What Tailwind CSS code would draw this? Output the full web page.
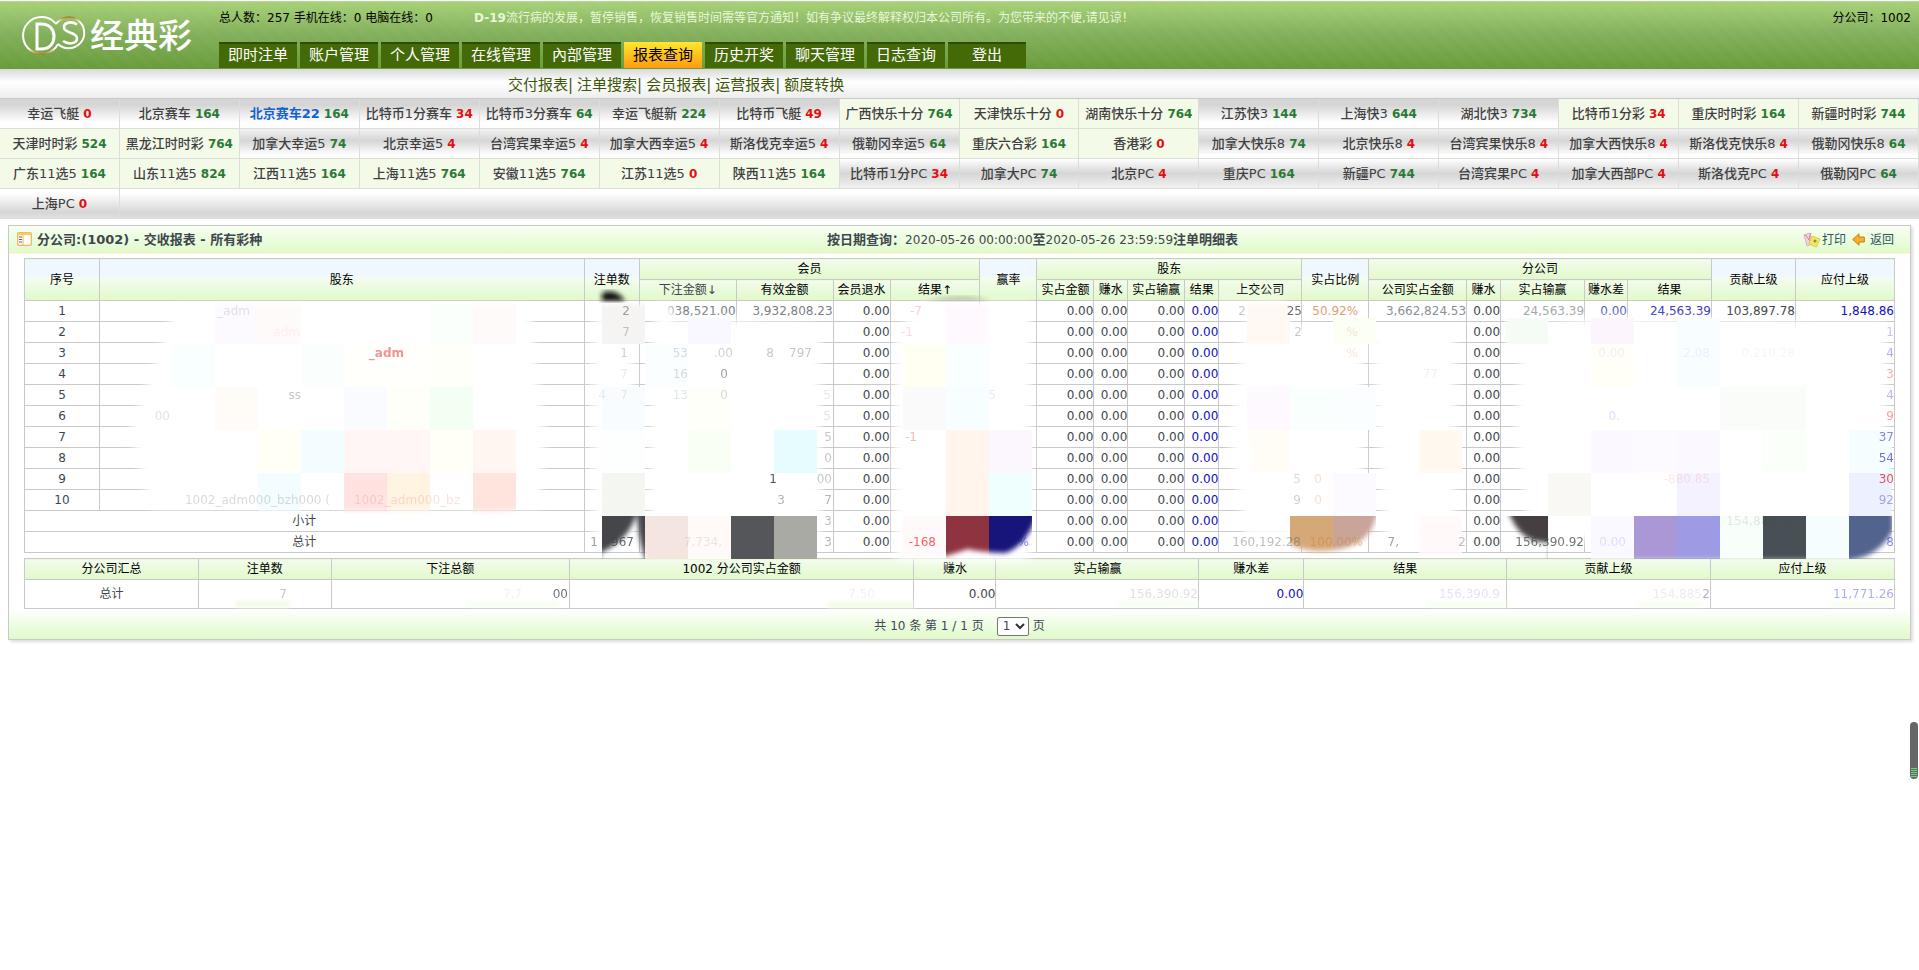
<!DOCTYPE html>
<html lang="zh-CN">
<head>
<meta charset="utf-8">
<title>经典彩 - 交收报表</title>
<script src="https://cdn.jsdelivr.net/npm/@tailwindcss/browser@4"></script>
</head>
<body class="relative min-h-screen bg-white font-['DejaVu_Sans','Noto_Sans_CJK_SC',sans-serif] text-xs text-[#3d474d]">

<header class="mt-px flex h-[68px] border-t border-[#b5d596] bg-[repeating-linear-gradient(45deg,rgba(255,255,255,0.05)_0px,rgba(255,255,255,0.05)_1px,rgba(0,0,0,0)_1px,rgba(0,0,0,0)_2px),linear-gradient(#a5d075,#83b05b_45%,#659a36)]">
  <a href="#" aria-label="DS 经典彩" class="block w-[219px] shrink-0">
    <svg class="block h-[67px] w-[219px]" viewBox="0 2 219 67">
      <defs>
        <linearGradient id="ring" x1="0" y1="0" x2="0" y2="1"><stop offset="0" stop-color="#fff"/><stop offset=".85" stop-color="#fff"/><stop offset="1" stop-color="#a8842a"/></linearGradient>
        <linearGradient id="ring2" x1="0" y1="0" x2="0" y2="1"><stop offset="0" stop-color="#a8842a"/><stop offset=".15" stop-color="#fff"/><stop offset="1" stop-color="#fff"/></linearGradient>
      </defs>
      <path d="M56 24A18.500 18.500 0 1 0 58 44" fill="none" stroke="url(#ring)" stroke-width="2"/>
      <path d="M56 24A15.500 15.500 0 1 1 58 44" fill="none" stroke="url(#ring2)" stroke-width="2"/>
      <path d="M37 24V49H41C50 49 54 43 54 36.500S50 24 41 24Z" fill="none" stroke="#fff" stroke-width="3"/>
      <path d="M77 24.500C72 21 64 22 64 27.500C64 33.500 77 32 77 38C77 44.500 68 44.500 63 41" fill="none" stroke="#fff" stroke-width="2.600"/>
      <text x="90" y="48" font-size="34" font-weight="500" fill="#fff" font-family="Noto Sans CJK SC">经典彩</text>
    </svg>
  </a>
  <div class="flex min-w-0 flex-1 flex-col justify-between">
    <div class="flex items-center pt-[7px] pr-2 leading-[18px] text-black">
      <span class="w-[255px] whitespace-nowrap">总人数：257 手机在线：0 电脑在线：0</span>
      <span class="flex-1 whitespace-nowrap text-[#e8f7d8]"><b>D-19</b>流行病的发展，暂停销售，恢复销售时间需等官方通知！如有争议最终解释权归本公司所有。为您带来的不便,请见谅！</span>
      <span>分公司：1002</span>
    </div>
    <nav id="nav" class="flex gap-[3px] pb-px text-[15px]"></nav>
  </div>
</header>

<nav id="sub" class="flex h-[29px] items-center gap-1 bg-linear-to-b from-[#d9d9d9] via-white via-45% to-[#ededed] pt-1 pl-[508px] text-[15px] text-[#3e5607]"></nav>

<section id="games" class="grid grid-cols-16 border-t border-[#c9c9c9] bg-linear-to-b from-white from-75% to-[#d6d6d6]"></section>

<main class="mx-2 mt-[6px] border border-[#c9c9c9] shadow-[2px_2px_3px_#ddd]">
  <div class="flex h-[28px] items-center justify-between border-b border-[#fdf3d8] bg-linear-to-b from-[#f8fff3] to-[#e0fac9] pr-4 pl-2 text-[13px]">
    <h1 class="flex items-center gap-[5px] font-bold">
      <svg class="h-[14px] w-[15px]" viewBox="0 0 15 14"><rect x=".7" y=".7" width="13.600" height="12.600" rx="1" fill="#fff" stroke="#f3b654" stroke-width="1.300"/><path d="M1 2H14" stroke="#f8cc70" stroke-width="2.400"/><path d="M6 2V13" stroke="#f3b654"/><path d="M2 5H5M2 7.500H5M2 10H5" stroke="#666"/></svg>
      分公司:(1002) - 交收报表 - 所有彩种
    </h1>
    <p><b>按日期查询：</b><span class="text-xs">2020-05-26 00:00:00</span><b>至</b><span class="text-xs">2020-05-26 23:59:59</span><b>注单明细表</b></p>
    <div class="flex items-center gap-[6px] text-xs text-[#2c5560]">
      <a href="#" class="flex items-center gap-px">
        <svg class="h-4 w-[18px]" viewBox="0 0 18 16"><path d="M1 3L7 1L9 12L4 14Z" fill="#f3d3da" stroke="#c9a0ab" stroke-width=".7"/><path d="M2 2.500L8 10M8 1L5.500 8" stroke="#d88490" stroke-width="1"/><path d="M9 4L17 7L13.500 15L6 12Z" fill="#f4e75c" stroke="#d0bd3a" stroke-width=".7"/><circle cx="12" cy="9" r="1.600" fill="#7d9a50"/></svg>打印</a>
      <a href="#" class="flex items-center gap-[5px]">
        <svg class="h-[13px] w-[13px]" viewBox="0 0 13 13"><path d="M.7 6.500L7 .8V4H12.300V9H7V12.200Z" fill="#fbb02b" stroke="#c87d14"/></svg>返回</a>
    </div>
  </div>
  <div class="px-[15px] pt-1">
    <table class="w-full table-fixed border-collapse text-center leading-[18px]">
      <colgroup id="cols"></colgroup>
      <thead id="head" class="text-black"></thead>
      <tbody id="body"></tbody>
    </table>
    <table class="mt-[5px] w-full table-fixed border-collapse text-center leading-[18px]">
      <colgroup id="cols2"></colgroup>
      <thead class="text-black"><tr id="head2"></tr></thead>
      <tbody><tr id="body2"></tr></tbody>
    </table>
  </div>
  <div class="flex h-[30px] items-center justify-center bg-linear-to-b from-white to-[#e0fac9] pt-1">
    <span>共 10 条 第 1 / 1 页</span>
    <label class="ml-[13px] flex items-center gap-1">
      <span class="relative flex">
        <select class="h-[19px] w-8 appearance-none rounded-[2px] border border-[#767676] bg-white pl-[5px] text-xs leading-none"><option>1</option></select>
        <svg class="pointer-events-none absolute top-[6px] right-1 h-[7px] w-[10px]" viewBox="0 0 10 7"><path d="M1 1L5 5L9 1" fill="none" stroke="#333" stroke-width="2"/></svg>
      </span>页</label>
  </div>
</main>

<!-- Redaction smudges and mosaic blocks over the private figures -->
<svg id="smudge" class="pointer-events-none absolute top-0 left-0 h-[650px] w-full" viewBox="0 0 1919 650" preserveAspectRatio="none" aria-hidden="true">
  <defs>
    <filter id="soft" x="-20%" y="-20%" width="140%" height="140%"><feGaussianBlur stdDeviation="5"/></filter>
    <filter id="fine" x="-20%" y="-20%" width="140%" height="140%"><feGaussianBlur stdDeviation="2.5"/></filter>
    <mask id="edge" maskUnits="userSpaceOnUse" x="0" y="290" width="1919" height="280">
      <g fill="#fff" filter="url(#fine)">
        <path d="M120 304H560V500Q510 514 480 511H120Z"/>
        <path d="M595 304H880V570H595Z"/>
        <path d="M880 304H1041V500Q1031 545 1005 553Q980 552 968 549L946 556H880Z"/>
        <path d="M1230 304H1465V516H1376Q1370 551 1318 551Q1285 550 1260 520Z"/>
        <path d="M1376 500H1465V555H1400Z"/>
        <path d="M1505 304H1893V530Q1880 556 1850 560H1550V542Q1520 545 1508 510Z"/>
      </g>
      <path d="M637 512Q630 540 600 553V570H650Q638 545 637 512Z" fill="#000" filter="url(#fine)"/>
    </mask>
  </defs>
  <g fill="#fff" filter="url(#soft)">
    <path d="M175 306H530L545 440L540 508H150L130 430Z"/>
    <path d="M593 318H633V536H593Z"/>
    <path d="M652 330L700 318L820 326V545H650Z"/>
    <path d="M655 305H674V330H655Z"/>
    <path d="M925 304H1030V560H895V330Z"/>
    <path d="M1244 322L1362 332V536H1245L1230 440Z"/>
    <path d="M1260 305H1284V330H1260Z"/>
    <path d="M1372 328H1455V540H1385Z"/>
    <path d="M1522 327L1600 318L1885 324V540H1530L1515 430Z"/>
    <path d="M1220 292H1285V306H1220Z" opacity=".3"/>
  </g>
  <path d="M602 293Q616 288 625 301H602Z" fill="#111" filter="url(#fine)"/>
  <path d="M925 301Q965 292 990 301Z" fill="#8a9a80" opacity=".6" filter="url(#fine)"/>
  <g id="cells" mask="url(#edge)" shape-rendering="crispEdges"></g>
  <g fill="#eefce3" filter="url(#fine)"><path d="M235 601H290V607H235ZM468 603H560V606H468ZM828 602H914V608H828ZM1118 602H1199V605H1118ZM1428 603H1510V606H1428ZM1638 603H1702V606H1638ZM1830 603H1890V606H1830Z"/></g>
  <g id="frags" font-size="12" font-family="DejaVu Sans"></g>
</svg>

<div class="absolute top-[722px] right-px h-[57px] w-2 overflow-hidden rounded-full bg-[#666]">
  <div class="absolute inset-x-px bottom-[2px] h-[9px] bg-[repeating-linear-gradient(#6fcf7f_0px,#6fcf7f_1px,#4c7a54_1px,#4c7a54_2px)]"></div>
</div>

<script>
const $ = id => document.getElementById(id);

$('nav').innerHTML = '即时注单 账户管理 个人管理 在线管理 內部管理 报表查询 历史开奖 聊天管理 日志查询 登出'.split(' ').map((t, i) =>
  `<a href="#" class="flex h-[26px] w-[78px] items-center justify-center border-t-2 ${i === 5 ? 'border-[#ffe23a] bg-linear-to-b from-[#ffe128] to-[#ff9b12] text-black' : 'border-[#2e4c03] bg-[#436a06] text-white'}">${t}</a>`).join('');
$('sub').innerHTML = '交付报表 注单搜索 会员报表 运营报表 额度转换'.split(' ').map((t, i) =>
  `<span class="flex"><a href="#">${t}</a>${i < 4 ? '|' : ''}</span>`).join('');

const games = [
  ['幸运飞艇 0', '北京赛车 164', '北京赛车22 164', '比特币1分赛车 34', '比特币3分赛车 64', '幸运飞艇新 224', '比特币飞艇 49', '广西快乐十分 764', '天津快乐十分 0', '湖南快乐十分 764', '江苏快3 144', '上海快3 644', '湖北快3 734', '比特币1分彩 34', '重庆时时彩 164', '新疆时时彩 744'],
  ['天津时时彩 524', '黑龙江时时彩 764', '加拿大幸运5 74', '北京幸运5 4', '台湾宾果幸运5 4', '加拿大西幸运5 4', '斯洛伐克幸运5 4', '俄勒冈幸运5 64', '重庆六合彩 164', '香港彩 0', '加拿大快乐8 74', '北京快乐8 4', '台湾宾果快乐8 4', '加拿大西快乐8 4', '斯洛伐克快乐8 4', '俄勒冈快乐8 64'],
  ['广东11选5 164', '山东11选5 824', '江西11选5 164', '上海11选5 764', '安徽11选5 764', '江苏11选5 0', '陕西11选5 164', '比特币1分PC 34', '加拿大PC 74', '北京PC 4', '重庆PC 164', '新疆PC 744', '台湾宾果PC 4', '加拿大西部PC 4', '斯洛伐克PC 4', '俄勒冈PC 64'],
  ['上海PC 0']
];
const greens = [[7, 8, 9, 13, 14, 15], [0, 1, 8, 9], [0, 1, 2, 3, 4, 5, 6], []];
const grays = [
  'bg-linear-to-b from-[#d5d5d5] from-20% to-white to-80%',
  'bg-linear-to-b from-[#f2f2f2] via-[#d6d6d6] via-40% to-white to-90%',
  'bg-linear-to-b from-white via-[#d6d6d6] via-50% to-[#f2f2f2]',
  'bg-linear-to-b from-white from-15% via-[#d6d6d6] via-80% to-[#e0e0e0]'
];
const redNums = [34, 49, 4, 0];
$('games').innerHTML = games.map((row, r) => row.map((t, c) => {
  const [name, n] = t.split(' ');
  return `<a href="#" class="flex h-[30px] items-center justify-center gap-1 border-r border-b border-[#dcdfd8] text-[13px] whitespace-nowrap ${greens[r].includes(c) ? 'bg-[#f4fae8]' : grays[r]}"><span class="${name === '北京赛车22' ? 'font-bold text-[#1461d2]' : 'font-medium text-[#404040]'}">${name}</span><b class="text-xs ${redNums.includes(+n) ? 'text-[#e01010]' : 'text-[#2a7a35]'}">${n}</b></a>`;
}).join('')).join('') + `<div class="col-span-15 ${grays[3]}"></div>`;

const cols = ws => ws.map(w => `<col style="width:${(w / 18.71).toFixed(3)}%">`).join('');
$('cols').innerHTML = cols([75, 485, 55, 97, 97, 57, 90, 57, 57, 34, 57, 34, 83, 67, 98, 34, 84, 43, 84, 84, 99]);
$('cols2').innerHTML = cols([174, 133, 238, 345, 82, 203, 105, 203, 204, 184]);

const tall = t => `<th rowspan="2" class="border border-[#c9c9c9] bg-linear-to-b from-[#f0f8ff] from-40% via-[#f4fcf0] via-45% to-[#e0f9c9] p-0 font-normal">${t}</th>`;
const th = (t, s = 1, cls = '') => `<th colspan="${s}" class="h-[21px] border border-[#c9c9c9] bg-linear-to-b from-[#f3fcec] to-[#e0f9c9] p-0 font-normal whitespace-nowrap ${cls}">${t}</th>`;
$('head').innerHTML = `<tr>${tall('序号')}${tall('股东')}${tall('注单数')}${th('会员', 4)}${tall('赢率')}${th('股东', 5)}${tall('实占比例')}${th('分公司', 5)}${tall('贡献上级')}${tall('应付上级')}</tr><tr>`
  + th('下注金额↓', 1, 'text-[#3d474d]') + '有效金额 会员退水 结果↑ 实占金额 赚水 实占输赢 结果 上交公司 公司实占金额 赚水 实占输赢 赚水差 结果'.split(' ').map(t => th(t)).join('') + '</tr>';

const td = (t, cls = '') => `<td class="h-[21px] border border-[#c9c9c9] p-0 ${cls}">${t}</td>`;
const num = (t, cls = '') => td(t, 'text-right ' + cls);
const blue = 'text-[#1010b8]';
const line = first => num(first[0]) + num(first[1], 'text-[#7a8085]') + num(first[2], 'text-[#7a8085]') + num('0.00') + num(first[3]) + num('')
  + num('0.00') + num('0.00') + num('0.00') + num('0.00', blue) + num('') + td(first[4], 'text-[#e0a070]') + num(first[5], 'text-[#8a9094]') + num('0.00')
  + num(first[6], 'text-[#a5a9ac]') + num(first[7], 'text-[#5a5ad0]') + num(first[8], 'text-[#3a3ac8]') + num(first[9]) + num(first[10], blue);
const empty = Array(11).fill('');
const row1 = ['', '038,521.00', '3,932,808.23', '', '50.92%', '3,662,824.53', '24,563.39', '0.00', '24,563.39', '103,897.78', '1,848.86'];
let html = '';
for (let i = 1; i <= 10; i++) html += '<tr>' + td(i) + td('') + line(i === 1 ? row1 : empty) + '</tr>';
for (const t of ['小计', '总计']) html += `<tr><td colspan="2" class="h-[21px] border border-[#c9c9c9] p-0">${t}</td>${line(empty)}</tr>`;
$('body').innerHTML = html;

$('head2').innerHTML = '分公司汇总,注单数,下注总额,1002 分公司实占金额,赚水,实占输赢,赚水差,结果,贡献上级,应付上级'.split(',').map(t => th(t)).join('');
$('body2').innerHTML = '<td class="h-[29px] border border-[#c9c9c9] p-0">总计</td>' + td('') + num('') + num('') + num('0.00') + num('') + num('0.00', blue) + num('') + num('') + num('');

/* Mosaic blocks on a 43px lattice: column, row, colour */
const cells = [
  [5,7,'#fcfafe'],[6,7,'#fffafa'],[10,7,'#fafffb'],[11,7,'#fffafa'],[4,8,'#f9feff'],[7,8,'#fafffd'],[8,8,'#fffffb'],[9,8,'#fffffb'],[10,8,'#fffffa'],
  [5,9,'#fffcf7'],[8,9,'#fafbff'],[9,9,'#fffffa'],[10,9,'#f4fff3'],[6,10,'#fffff5'],[7,10,'#f3fdff'],[8,10,'#fff6f5'],[9,10,'#fff6f5'],[10,10,'#fffff8'],[11,10,'#fff5f1'],
  [6,11,'#f3fdff'],[8,11,'#ffe3e2'],[9,11,'#fff4e2'],[11,11,'#ffe3dd'],
  [14,7,'#f6f4f3'],[14,9,'#f8fcff'],[14,10,'#fcfffe'],[14,11,'#f4f7f1'],[14,12,'#45464a'],[15,8,'#fbfeff'],[16,9,'#fffffa'],[16,10,'#fafff6'],
  [15,12,'#f5e5e0'],[16,12,'#fffaf8'],[17,12,'#54565a'],[18,12,'#a9aaa3'],[18,10,'#e7fcff'],
  [21,8,'#fffff2'],[21,9,'#fafafa'],[22,7,'#fff9ff'],[22,8,'#f9ffff'],[22,9,'#f6feff'],[22,10,'#fff5ed'],[22,11,'#fff5ed'],[21,12,'#fffafa'],[22,12,'#8f3340'],
  [23,10,'#fcf7ff'],[23,11,'#effffe'],[23,12,'#17147a'],
  [29,7,'#fff8f3'],[29,9,'#fdf9ff'],[29,10,'#fffdf5'],[30,9,'#f9fffd'],[31,9,'#fafeff'],[31,11,'#fdfaff'],[30,12,'#d5a878'],[31,12,'#c9a498'],
  [33,10,'#fff9f0'],[33,12,'#fffaf9'],[35,12,'#453f42'],[36,11,'#faf8f4'],[37,8,'#fffff8'],[37,10,'#fcf8ff'],[37,12,'#faf9ff'],
  [38,10,'#fdfaff'],[38,12,'#a998d5'],[39,8,'#f8fdff'],[39,10,'#fbf8ff'],[39,11,'#f5f2ff'],[39,12,'#9d9be3'],[40,12,'#f8fefa'],[40,9,'#fafcfa'],[41,9,'#fafcfa'],
  [41,10,'#fafffa'],[41,12,'#465055'],[42,12,'#f5fdff'],[43,10,'#f5fdff'],[43,11,'#edf0ff'],[43,12,'#52638e']
];
/* Lower parts of blocks whose upper part leaves the first row readable */
const strips = [[16,'#f9f7ff'],[31,'#fbfff4'],[35,'#f5fcf6'],[37,'#fcf5fd'],[39,'#f8fdff']];
$('cells').innerHTML = cells.map(([c, r, f]) => `<rect x="${c * 43}" y="${r * 43}" width="43" height="43" fill="${f}"/>`).join('')
  + strips.map(([c, f]) => `<rect x="${c * 43}" y="318" width="43" height="26" fill="${f}"/>`).join('');

/* Remnants of figures still visible through the smudges: right edge, baseline, text, colour, opacity */
const g = '#3d474d', b = '#1010c0', d = '#e01010', o = '#d8803a';
const frags = [
  [630,315,'2',g,.5],[630,336,'7',g,.3],[628,357,'1',g,.25],[628,378,'7',g,.12],[606,399,'4',g,.1],[628,399,'7',g,.12],
  [250,315,'_adm',g,.15],[300,336,'adm',d,.06],[404,357,'_adm',d,.45,'bold'],[301,399,'ss',g,.3],[170,420,'00',g,.15],[330,504,'1002_adm000_bzh000 (',g,.2],[460,504,'1002_adm000_bz',d,.13],
  [688,357,'53',g,.2],[733,357,'.00',g,.25],[688,378,'16',g,.2],[728,378,'0',g,.5],[688,399,'13',g,.15],[728,399,'0',g,.2],
  [812,357,'8    797',g,.3],[831,399,'5',g,.12],[831,420,'5',g,.15],[832,441,'5',g,.3],[832,462,'0',g,.3],[777,483,'1',g,.9],[832,483,'00',g,.3],[785,504,'3',g,.4],[832,504,'7',g,.4],[832,525,'3',g,.35],[832,546,'3',g,.4],
  [922,315,'-7',d,.2],[913,336,'-1',d,.15],[917,441,'-1',d,.3],[996,399,'5',b,.1],[936,546,'-168',d,.65],[1029,546,'%',b,.5],
  [1302,315,'25',g,.8],[1246,315,'2',g,.3],[1302,336,'2',g,.3],[1358,336,'%',o,.2],[1358,357,'%',o,.2],[1301,483,'5',g,.2],[1301,504,'9',g,.25],[1322,483,'0',o,.25],[1322,504,'0',o,.25],
  [1301,546,'160,192.28',g,.35],[1363,546,'100.00%',o,.5],[1399,546,'7,',g,.5],[1466,546,'2',g,.35],[1438,378,'77',g,.08],
  [1625,357,'0.00',b,.07],[1620,420,'0.',b,.15],[1710,357,'2.08',b,.06],[1795,357,'0,210.28',g,.05],[1710,483,'-880.85',d,.1],
  [1894,336,'1',b,.25],[1894,357,'4',b,.35],[1894,378,'3',d,.35],[1894,399,'4',b,.3],[1894,420,'9',d,.4],[1894,441,'37',b,.5],[1894,462,'54',b,.6],[1894,483,'30',d,.7],[1894,504,'92',b,.35],[1894,546,'8',b,.5],
  [1584,546,'156,390.92',g,.75],[1626,546,'0.00',b,.12],[1795,525,'154,885.02',g,.12],
  [634,546,'967',g,.8],[598,546,'1',g,.5],[722,546,'7,734,',g,.12],
  [287,598,'7',g,.3],[568,598,'00',g,.75],[522,598,'7,7',g,.08],[1198,598,'156,390.92',g,.16],[1500,598,'156,390.9',b,.12],[1702,598,'154,885',g,.1],[1710,598,'2',g,.4],[1894,598,'11,771.26',b,.35],[875,598,'7,50',g,.08]
];
$('frags').innerHTML = frags.map(([x, y, t, f, a, w = 'normal']) => `<text x="${x}" y="${y}" text-anchor="end" font-weight="${w}" fill="${f}" fill-opacity="${a}" xml:space="preserve">${t}</text>`).join('');
</script>
</body>
</html>
